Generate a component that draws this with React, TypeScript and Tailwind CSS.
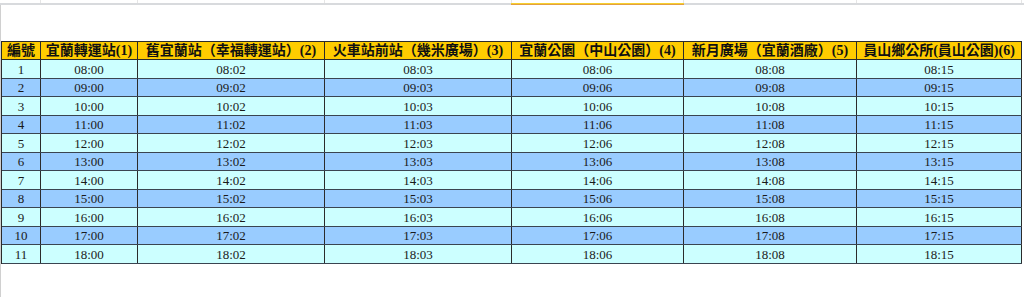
const cols = [39, 97, 187, 187, 172, 173, 165]

const headers = [
  "編號",
  "宜蘭轉運站(1)",
  "舊宜蘭站（幸福轉運站）(2)",
  "火車站前站（幾米廣場）(3)",
  "宜蘭公園（中山公園）(4)",
  "新月廣場（宜蘭酒廠）(5)",
  "員山鄉公所(員山公園)(6)",
]

const offsets = [0, 2, 3, 6, 8, 15]

function pad(n: number) {
  return n < 10 ? "0" + n : "" + n
}

const rows = Array.from({ length: 11 }, (_, i) => {
  const h = 8 + i
  return [String(i + 1), ...offsets.map((m) => `${pad(h)}:${pad(m)}`)]
})

export default function App() {
  return (
    <div
      className="w-[1024px] h-[297px] bg-white overflow-hidden"
      style={{ fontFamily: '"Liberation Serif", "Noto Sans CJK TC", serif' }}
    >
      {/* sheet column header edge */}
      <div className="flex h-[3px] ml-[2px]">
        {cols.map((w, i) => (
          <div key={i} className="h-full border-r border-[#e6e6e6]" style={{ width: w }} />
        ))}
      </div>
      <div className="relative h-[2px] bg-[#d8dadd]">
        <div className="absolute left-[511px] top-0 h-[2px] w-[173px] bg-[#f6cf2e] border-b border-[#e3a040]" />
      </div>

      <div className="h-[292px] border-l border-[#d0d0d0]">
        <div className="h-[36px]" />
        <div className="w-fit border-l border-t border-[#2b2b2b]">
          <div className="flex h-[18px] bg-[#ffcc00] border-b border-[#2b2b2b]">
            {headers.map((t, i) => (
              <div
                key={i}
                className="flex items-center justify-center border-r border-[#2b2b2b] text-[14px] font-bold text-[#111] whitespace-nowrap leading-none"
                style={{ width: cols[i] }}
              >
                {t}
              </div>
            ))}
          </div>
          {rows.map((r, ri) => (
            <div
              key={ri}
              className={
                "flex border-b border-[#3a4450] " +
                (ri % 2 === 0 ? "h-[19px] bg-[#ccffff]" : "h-[18px] bg-[#99ccff]")
              }
            >
              {r.map((c, ci) => (
                <div
                  key={ci}
                  className="flex items-center justify-center border-r border-[#2b2b2b] text-[13px] text-[#1a1a1a] leading-none"
                  style={{ width: cols[ci] }}
                >
                  {c}
                </div>
              ))}
            </div>
          ))}
        </div>
      </div>
    </div>
  )
}
